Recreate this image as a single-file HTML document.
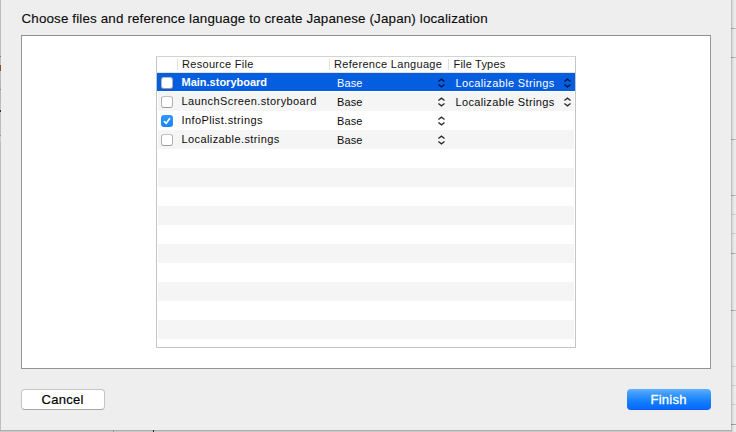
<!DOCTYPE html>
<html lang="en">
<head>
<meta charset="utf-8">
<title>Choose files and reference language</title>
<style>
html,body{margin:0;padding:0;}
body{width:736px;height:432px;overflow:hidden;position:relative;background:#e4e4e4;font-family:"Liberation Sans",sans-serif;color:#1a1a1a;-webkit-font-smoothing:antialiased;}
.abs{position:absolute;}
#bgR{left:731px;top:0;width:5px;height:432px;background:linear-gradient(to right,#c0c0c0 0,#c0c0c0 1px,#d9d9d9 1px,#d9d9d9 2px,#e3e3e3 2px,#e3e3e3 3px,#e9e9e9 3px,#e9e9e9 4px,#ededed 4px);}
.hl{position:absolute;left:731px;width:5px;height:1px;background:linear-gradient(to right,#8e8e8e,#c4c4c4);}
.hl.f{background:linear-gradient(to right,#b4b4b4,#d6d6d6);}
#bgL{left:0;top:0;width:1px;height:432px;background:#bdbdbd;}
.lm{position:absolute;left:0;width:1px;}
#bgB{left:0;top:430px;width:732px;height:2px;background:linear-gradient(#adadad 0,#adadad 1px,#c8c8c8 1px);}
.vl{position:absolute;top:430px;width:1px;height:2px;}
#sheet{left:1px;top:0;width:730px;height:430px;background:#eeeeee;}
#title{left:20.5px;top:10px;-webkit-text-stroke:0.1px #0a0a0a;font-size:13.4px;line-height:18px;white-space:nowrap;letter-spacing:0.142px;color:#0a0a0a;}
#box{left:20px;top:35px;width:688px;height:332px;border:1px solid #969696;border-top-color:#8e8e8e;border-bottom-color:#939393;background:#fff;}
#table{left:155px;top:56px;width:418px;height:290px;border:1px solid #c5c5c5;border-top-color:#d3d3d3;border-bottom-color:#c4c4c4;background:#fff;overflow:hidden;}
#thead{left:0;top:0;width:418px;height:15px;border-bottom:1px solid #e2e2e2;background:#fff;}
.th{position:absolute;top:0;font-size:11px;line-height:15px;white-space:nowrap;letter-spacing:0.3px;color:#141414;}
.sep{position:absolute;top:2px;width:1px;height:11px;background:#dedede;}
.row{position:absolute;left:0;width:418px;height:19px;}
.row.alt:before{content:"";position:absolute;left:1px;top:0;width:416px;height:19px;background:#f5f5f5;}
.row.sel .bg{position:absolute;left:0;top:0;width:418px;height:18px;background:#055ee0;}
.cell{position:absolute;font-size:11px;line-height:19px;white-space:nowrap;letter-spacing:0.4px;color:#0c0c0c;}
.sel .cell{color:#fff;}
.cb{position:absolute;left:4px;top:4px;width:10px;height:10px;border:1px solid #b2b2b2;border-top-color:#c0c0c0;border-bottom-color:#9c9c9c;border-radius:3px;background:#fff;}
.cb.on{border:0;width:12px;height:12px;background:linear-gradient(#3299fb,#1784fb);}
.chev{position:absolute;top:4px;width:9px;height:12px;}
.btn{position:absolute;top:389px;height:19px;width:82px;border-radius:4px;font-size:13px;line-height:20px;white-space:nowrap;}
.btn span{position:absolute;top:0;}
#cancel{left:20px;background:#fff;border:1px solid #c4c4c4;border-bottom-color:#a6a6a6;color:#000;-webkit-text-stroke:0.2px #000;}
#finish{left:626px;width:84px;height:21px;background:linear-gradient(#60affc 0%,#3a98fb 25%,#1a86fb 50%,#0c75fc 75%,#0a68fd 94%,#0a58f0 100%);color:#fff;}
</style>
</head>
<body>
<div id="bgR" class="abs"></div>
<div class="hl" style="top:28px"></div><div class="hl" style="top:57px"></div><div class="hl" style="top:139px"></div><div class="hl" style="top:195px"></div><div class="hl f" style="top:214px"></div><div class="hl f" style="top:233px"></div><div class="hl" style="top:253px"></div><div class="hl" style="top:310px"></div><div class="hl f" style="top:366px"></div><div class="hl f" style="top:385px"></div><div class="hl f" style="top:404px"></div><div class="hl" style="top:424px;background:linear-gradient(to right,#828282,#b0b0b0)"></div>
<div id="bgL" class="abs"></div>
<div id="bgB" class="abs"></div>
<div class="vl" style="left:113px;background:#9a9a9a"></div><div class="vl" style="left:153px;background:#222"></div>
<div class="lm" style="top:56px;height:1px;background:#777"></div><div class="lm" style="top:65px;height:6px;background:#8a4a30"></div><div class="lm" style="top:80px;height:22px;background:#b4b8bc"></div><div class="lm" style="top:89px;height:1px;background:#c07a40"></div><div class="lm" style="top:110px;height:2px;background:#333"></div><div class="lm" style="top:135px;height:1px;background:#c08a50"></div><div class="lm" style="top:136px;height:6px;background:#c4ccd2"></div>
<div id="sheet" class="abs">
  <div id="title" class="abs">Choose files and reference language to create Japanese (Japan) localization</div>
  <div id="box" class="abs"></div>
  <div id="table" class="abs">
    <div id="thead" class="abs">
      <div class="sep" style="left:20px"></div>
      <div class="th" style="left:25px">Resource File</div>
      <div class="sep" style="left:172px"></div>
      <div class="th" style="left:177px">Reference Language</div>
      <div class="sep" style="left:291px"></div>
      <div class="th" style="left:296.5px;letter-spacing:0.2px">File Types</div>
    </div>
    <div class="row sel" style="top:16px"><div class="bg"></div>
      <div class="cb"></div>
      <div class="cell" style="left:24.5px;font-weight:bold;letter-spacing:0">Main.storyboard</div>
      <div class="cell" style="left:180px;top:1px;letter-spacing:0.1px">Base</div>
      <svg class="chev" style="left:280.1px" viewBox="0 0 9 12"><path d="M1.4 4.5 4.45 2.15 7.5 4.5M1.4 7.5 4.45 9.85 7.5 7.5" fill="none" stroke="#06163a" stroke-width="1.3"/></svg>
      <div class="cell" style="left:298.5px;top:1px;letter-spacing:0.35px">Localizable Strings</div>
      <svg class="chev" style="left:406px" viewBox="0 0 9 12"><path d="M1.4 4.5 4.45 2.15 7.5 4.5M1.4 7.5 4.45 9.85 7.5 7.5" fill="none" stroke="#06163a" stroke-width="1.3"/></svg>
    </div>
    <div class="row alt" style="top:35px">
      <div class="cb"></div>
      <div class="cell" style="left:24.5px">LaunchScreen.storyboard</div>
      <div class="cell" style="left:180px;top:1px;letter-spacing:0.1px">Base</div>
      <svg class="chev" style="left:280.1px" viewBox="0 0 9 12"><path d="M1.4 4.5 4.45 2.15 7.5 4.5M1.4 7.5 4.45 9.85 7.5 7.5" fill="none" stroke="#2a2a2a" stroke-width="1.25"/></svg>
      <div class="cell" style="left:298.5px;top:1px;letter-spacing:0.35px">Localizable Strings</div>
      <svg class="chev" style="left:406px" viewBox="0 0 9 12"><path d="M1.4 4.5 4.45 2.15 7.5 4.5M1.4 7.5 4.45 9.85 7.5 7.5" fill="none" stroke="#2a2a2a" stroke-width="1.25"/></svg>
    </div>
    <div class="row" style="top:54px">
      <div class="cb on"><svg width="12" height="12" viewBox="0 0 12 12" style="position:absolute;left:0;top:0"><path d="M3.4 6.6 5.2 8.4 8.5 3.7" fill="none" stroke="#fff" stroke-width="1.6" stroke-linecap="round" stroke-linejoin="round"/></svg></div>
      <div class="cell" style="left:24.5px">InfoPlist.strings</div>
      <div class="cell" style="left:180px;top:1px;letter-spacing:0.1px">Base</div>
      <svg class="chev" style="left:280.1px" viewBox="0 0 9 12"><path d="M1.4 4.5 4.45 2.15 7.5 4.5M1.4 7.5 4.45 9.85 7.5 7.5" fill="none" stroke="#2a2a2a" stroke-width="1.25"/></svg>
    </div>
    <div class="row alt" style="top:73px">
      <div class="cb"></div>
      <div class="cell" style="left:24.5px">Localizable.strings</div>
      <div class="cell" style="left:180px;top:1px;letter-spacing:0.1px">Base</div>
      <svg class="chev" style="left:280.1px" viewBox="0 0 9 12"><path d="M1.4 4.5 4.45 2.15 7.5 4.5M1.4 7.5 4.45 9.85 7.5 7.5" fill="none" stroke="#2a2a2a" stroke-width="1.25"/></svg>
    </div>
    <div class="row alt" style="top:111px"></div>
    <div class="row alt" style="top:149px"></div>
    <div class="row alt" style="top:187px"></div>
    <div class="row alt" style="top:225px"></div>
    <div class="row alt" style="top:263px"></div>
  </div>
  <div id="cancel" class="btn"><span style="left:19.5px;letter-spacing:0.3px">Cancel</span></div>
  <div id="finish" class="btn"><span style="left:23.6px;top:1px;letter-spacing:0.22px;-webkit-text-stroke:0.3px #fff">Finish</span></div>
</div>
</body>
</html>
